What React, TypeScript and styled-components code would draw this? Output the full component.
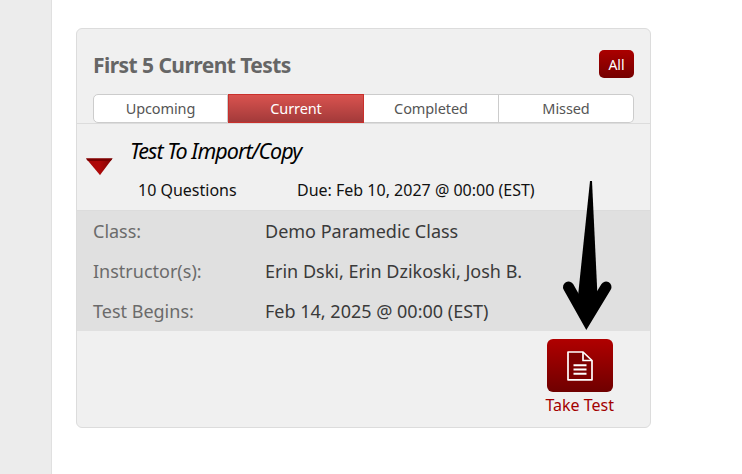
import React from 'react';
import styled, { createGlobalStyle } from 'styled-components';

const GlobalStyle = createGlobalStyle`
  html, body {
    margin: 0;
    padding: 0;
    background: #fff;
    font-family: "Noto Sans", "Open Sans", sans-serif;
  }
  * { box-sizing: border-box; }
`;

const tabs = ['Upcoming', 'Current', 'Completed', 'Missed'];

const details = [
  { label: 'Class:', value: 'Demo Paramedic Class' },
  { label: 'Instructor(s):', value: 'Erin Dski, Erin Dzikoski, Josh B.' },
  { label: 'Test Begins:', value: 'Feb 14, 2025 @ 00:00 (EST)' },
];

const App: React.FC = () => {
  return (
    <Page>
      <GlobalStyle />
      <SideRail />
      <Main>
        <Card>
          <CardHeader>
            <Title>First 5 Current Tests</Title>
            <AllButton>All</AllButton>
          </CardHeader>
          <TabBar>
            {tabs.map((tab) => (
              <Tab key={tab} $active={tab === 'Current'}>
                {tab}
              </Tab>
            ))}
          </TabBar>
          <Summary>
            <Caret viewBox="0 0 30 19" aria-hidden="true">
              <defs>
                <linearGradient id="caretFill" x1="0" y1="0" x2="1" y2="0">
                  <stop offset="0" stopColor="#a80a0a" />
                  <stop offset="0.5" stopColor="#b00808" />
                  <stop offset="1" stopColor="#7c0404" />
                </linearGradient>
              </defs>
              <path d="M2 1.5 H29 L26 2 L15 18.5 Z" fill="#d0c4c4" />
              <path d="M1 1.5 H27.5 L15 18 Z" fill="url(#caretFill)" />
              <path d="M1 1.5 H27.5 L25.6 4 H3 Z" fill="#7a0000" />
            </Caret>
            <SummaryText>
              <TestName>Test To Import/Copy</TestName>
              <Meta>
                <Questions>10 Questions</Questions>
                <span>Due: Feb 10, 2027 @ 00:00 (EST)</span>
              </Meta>
            </SummaryText>
          </Summary>
          <Details>
            {details.map((row) => (
              <DetailRow key={row.label}>
                <DetailLabel>{row.label}</DetailLabel>
                <DetailValue>{row.value}</DetailValue>
              </DetailRow>
            ))}
          </Details>
          <Actions>
            <TakeTest>
              <TakeButton>
                <svg width="26" height="30" viewBox="0 0 26 30" fill="none" aria-hidden="true">
                  <path d="M1.5 29 V1 H16 L25 9.5 V29 Z" fill="#7e0000" />
                  <path
                    d="M1 1 H16 L25 9.5 V28.8 H1 Z"
                    stroke="#fff"
                    strokeWidth="1.7"
                    strokeLinejoin="round"
                  />
                  <path d="M16 1 V9.5 H25" stroke="#fff" strokeWidth="1.7" strokeLinejoin="round" />
                  <path d="M6.5 14.3 H19.5 M6.5 18.5 H19.5 M6.5 22.7 H19.5" stroke="#fff" strokeWidth="2" />
                </svg>
              </TakeButton>
              <TakeLabel>Take Test</TakeLabel>
            </TakeTest>
          </Actions>
        </Card>
        <Arrow viewBox="555 175 65 160" aria-hidden="true">
          <path d="M590 181 L592 181 L597.5 296 L586.5 322 L578 296 Z" fill="#000" />
          <path
            d="M568.5 287 L586.5 319 L606 287"
            fill="none"
            stroke="#000"
            strokeWidth="11"
            strokeLinecap="round"
            strokeLinejoin="miter"
            strokeMiterlimit="4"
          />
        </Arrow>
      </Main>
    </Page>
  );
};

export default App;

const Page = styled.div`
  display: flex;
  width: 742px;
  height: 474px;
  overflow: hidden;
  background: #fff;
`;

const SideRail = styled.div`
  width: 52px;
  flex: none;
  background: #ececec;
  border-right: 1px solid #e0e0e0;
`;

const Main = styled.main`
  position: relative;
  flex: 1;
  padding: 28px 0 0 24px;
`;

const Card = styled.section`
  width: 575px;
  height: 400px;
  display: flex;
  flex-direction: column;
  background: #f0f0f0;
  border: 1px solid #dcdcdc;
  border-radius: 6px;
`;

const CardHeader = styled.header`
  display: flex;
  align-items: center;
  justify-content: space-between;
  height: 65px;
  padding: 8px 16px 0;
`;

const Title = styled.h2`
  margin: -2px 0 0;
  font-size: 21px;
  font-weight: 700;
  color: #666;
  letter-spacing: -0.55px;
`;

const AllButton = styled.button`
  width: 35px;
  height: 28px;
  padding: 0;
  border: none;
  border-radius: 5px;
  margin-top: -3px;
  font: inherit;
  font-size: 14px;
  color: #fff;
  background: linear-gradient(#ab0000, #750000);
`;

const TabBar = styled.nav`
  display: grid;
  grid-template-columns: 135px 136px 135px 135px;
  height: 29px;
  padding: 0 16px;
`;

const Tab = styled.div<{ $active?: boolean }>`
  display: flex;
  align-items: center;
  justify-content: center;
  padding-bottom: 2px;
  font-size: 14.5px;
  letter-spacing: -0.1px;
  color: ${(p) => (p.$active ? '#fff' : '#555')};
  background: ${(p) => (p.$active ? 'linear-gradient(#d9534f, #a33a3a)' : '#fff')};
  border: 1px solid ${(p) => (p.$active ? '#c9302c' : '#ccc')};
  border-left-width: ${(p) => (p.$active ? '1px' : '0')};

  &:first-child {
    border-left-width: 1px;
    border-radius: 5px 0 0 5px;
  }
  &:last-child {
    border-radius: 0 5px 5px 0;
  }
`;

const Summary = styled.div`
  display: flex;
  height: 88px;
  border-top: 1px solid #dcdcdc;
  border-bottom: 1px solid #dcdcdc;
`;

const Caret = styled.svg`
  width: 30px;
  height: 19px;
  flex: none;
  margin: 33px 0 0 8px;
  filter: blur(0.4px);
`;

const SummaryText = styled.div`
  display: flex;
  flex-direction: column;
  margin-left: 15px;
`;

const TestName = styled.div`
  margin-top: 12px;
  font-size: 21.5px;
  font-style: italic;
  color: #000;
  letter-spacing: -0.95px;
`;

const Meta = styled.div`
  display: flex;
  margin-top: 14px;
  padding-left: 8px;
  font-size: 16px;
  color: #111;
`;

const Questions = styled.span`
  width: 159px;
`;

const Details = styled.div`
  display: flex;
  flex-direction: column;
  height: 120px;
  padding: 0 16px;
  background: #e0e0e0;
`;

const DetailRow = styled.div`
  display: flex;
  align-items: center;
  height: 40px;
  font-size: 18px;
`;

const DetailLabel = styled.span`
  width: 172px;
  color: #6b6b6b;
`;

const DetailValue = styled.span`
  color: #3a3a3a;
`;

const Actions = styled.div`
  display: flex;
  justify-content: flex-end;
  padding: 8px 36px 0 0;
`;

const TakeTest = styled.div`
  display: flex;
  flex-direction: column;
  align-items: center;
  gap: 2px;
`;

const TakeButton = styled.button`
  display: flex;
  align-items: center;
  justify-content: center;
  width: 66px;
  height: 53px;
  padding: 0;
  border: none;
  border-radius: 6px;
  background: linear-gradient(#b00000, #6f0000);
`;

const TakeLabel = styled.span`
  font-size: 16px;
  color: #a30000;
`;

const Arrow = styled.svg`
  position: absolute;
  left: 503px;
  top: 175px;
  width: 65px;
  height: 160px;
`;
